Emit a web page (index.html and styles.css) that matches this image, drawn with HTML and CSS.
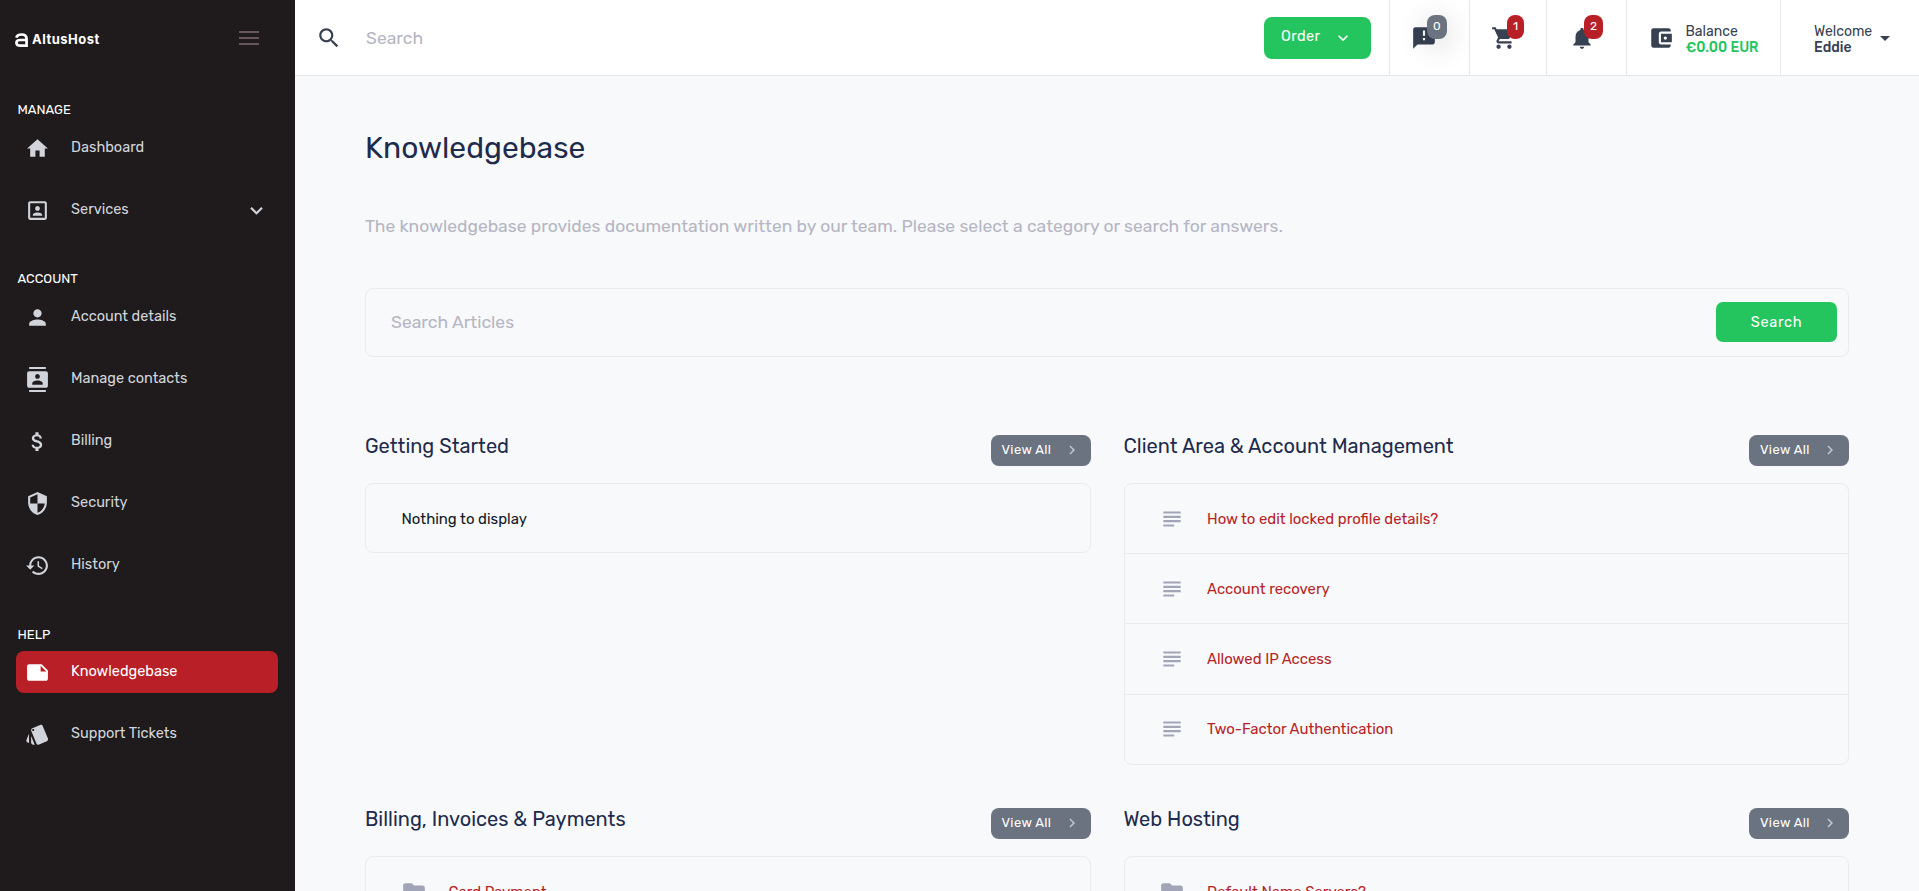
FILE: index.html
```html
<!DOCTYPE html>
<html lang="en">
<head>
  <meta charset="UTF-8">
  <title>Knowledgebase - AltusHost</title>
  <meta name="viewport" content="width=device-width, initial-scale=1.0">

  <link rel="stylesheet" href="styles.css">
</head>
<body>

  <!-- icon set -->
  <svg class="sprite" width="0" height="0">
    <symbol id="i-home" viewBox="0 0 24 24"><path d="M10 20v-6h4v6h5v-8h3L12 3 2 12h3v8z"/></symbol>
    <symbol id="i-portrait" viewBox="0 0 24 24"><path d="M12 12.25c1.24 0 2.25-1.01 2.25-2.25S13.24 7.75 12 7.75 9.75 8.76 9.75 10s1.01 2.25 2.25 2.25zm4.5 4c0-1.5-3-2.25-4.5-2.25s-4.5.75-4.5 2.25V17h9v-.75zM19 3H5c-1.1 0-2 .9-2 2v14c0 1.1.9 2 2 2h14c1.1 0 2-.9 2-2V5c0-1.1-.9-2-2-2zm0 16H5V5h14v14z"/></symbol>
    <symbol id="i-person" viewBox="0 0 24 24"><path d="M12 12c2.21 0 4-1.79 4-4s-1.79-4-4-4-4 1.79-4 4 1.79 4 4 4zm0 2c-2.67 0-8 1.34-8 4v2h16v-2c0-2.66-5.33-4-8-4z"/></symbol>
    <symbol id="i-contacts" viewBox="0 0 24 24"><path d="M20 0H4v2h16V0zM4 24h16v-2H4v2zM20 4H4c-1.1 0-2 .9-2 2v12c0 1.1.9 2 2 2h16c1.1 0 2-.9 2-2V6c0-1.1-.9-2-2-2zm-8 2.75c1.24 0 2.25 1.01 2.25 2.25s-1.01 2.25-2.25 2.25S9.75 10.24 9.75 9 10.76 6.75 12 6.75zM17 17H7v-1.5c0-1.67 3.33-2.5 5-2.5s5 .83 5 2.5V17z"/></symbol>
    <symbol id="i-money" viewBox="0 0 24 24"><path d="M11.8 10.9c-2.27-.59-3-1.2-3-2.15 0-1.09 1.01-1.85 2.7-1.85 1.78 0 2.44.85 2.5 2.1h2.21c-.07-1.72-1.12-3.3-3.21-3.81V3h-3v2.16c-1.94.42-3.5 1.68-3.5 3.61 0 2.31 1.91 3.46 4.7 4.13 2.5.6 3 1.48 3 2.41 0 .69-.49 1.79-2.7 1.79-2.06 0-2.87-.92-2.98-2.1h-2.2c.12 2.19 1.76 3.42 3.68 3.83V21h3v-2.15c1.95-.37 3.5-1.5 3.5-3.55 0-2.84-2.43-3.81-4.7-4.4z"/></symbol>
    <symbol id="i-security" viewBox="0 0 24 24"><path d="M12 1L3 5v6c0 5.55 3.84 10.74 9 12 5.16-1.26 9-6.45 9-12V5l-9-4zm0 10.99h7c-.53 4.12-3.28 7.79-7 8.94V12H5V6.3l7-3.11v8.8z"/></symbol>
    <symbol id="i-history" viewBox="0 0 24 24"><path d="M13 3c-4.97 0-9 4.03-9 9H1l3.89 3.89.07.14L9 12H6c0-3.87 3.13-7 7-7s7 3.13 7 7-3.13 7-7 7c-1.93 0-3.68-.79-4.94-2.06l-1.42 1.42C8.27 19.99 10.51 21 13 21c4.97 0 9-4.03 9-9s-4.03-9-9-9zm-1 5v5l4.28 2.54.72-1.21-3.5-2.08V8H12z"/></symbol>
    <symbol id="i-note" viewBox="0 0 24 24"><path d="M22 10l-6-6H4c-1.1 0-2 .9-2 2v12.01c0 1.1.9 1.99 2 1.99l16-.01c1.1 0 2-.89 2-1.99v-8zm-7-4.5l5.5 5.5H15V5.5z"/></symbol>
    <symbol id="i-style" viewBox="0 0 24 24"><path d="M2.53 19.65l1.34.56v-9.03l-2.43 5.86c-.41 1.02.08 2.19 1.09 2.61zm19.5-3.7L17.07 3.98c-.31-.75-1.04-1.21-1.81-1.23-.26 0-.53.04-.79.15L7.1 5.95c-.75.31-1.21 1.03-1.23 1.8-.01.27.04.54.15.8l4.96 11.97c.31.76 1.05 1.22 1.83 1.23.26 0 .52-.05.77-.15l7.36-3.05c1.02-.42 1.51-1.59 1.09-2.6zM7.88 8.75c-.55 0-1-.45-1-1s.45-1 1-1 1 .45 1 1-.45 1-1 1zm-2 11c0 1.1.9 2 2 2h1.45l-3.45-8.34v6.34z"/></symbol>
    <symbol id="i-down" viewBox="0 0 24 24"><path d="M7.41 8.59L12 13.17l4.59-4.58L18 10l-6 6-6-6z"/></symbol>
    <symbol id="i-right" viewBox="0 0 24 24"><path d="M10 6L8.59 7.41 13.17 12l-4.58 4.59L10 18l6-6z"/></symbol>
    <symbol id="i-search" viewBox="0 0 24 24"><path d="M15.5 14h-.79l-.28-.27C15.41 12.59 16 11.11 16 9.5 16 5.91 13.09 3 9.5 3S3 5.91 3 9.5 5.91 16 9.5 16c1.61 0 3.09-.59 4.23-1.57l.27.28v.79l5 4.99L20.49 19l-4.99-5zm-6 0C7.01 14 5 11.99 5 9.5S7.01 5 9.5 5 14 7.01 14 9.5 11.99 14 9.5 14z"/></symbol>
    <symbol id="i-feedback" viewBox="0 0 24 24"><path d="M20 2H4c-1.1 0-1.99.9-1.99 2L2 22l4-4h14c1.1 0 2-.9 2-2V4c0-1.1-.9-2-2-2zm-7 12h-2v-2h2v2zm0-4h-2V5h2v5z"/></symbol>
    <symbol id="i-cart" viewBox="0 0 24 24"><path d="M7 18c-1.1 0-1.99.9-1.99 2S5.9 22 7 22s2-.9 2-2-.9-2-2-2zM1 2v2h2l3.6 7.59-1.35 2.45c-.16.28-.25.61-.25.96 0 1.1.9 2 2 2h12v-2H7.42c-.14 0-.25-.11-.25-.25l.03-.12.9-1.63h7.45c.75 0 1.41-.41 1.75-1.03l3.58-6.49c.08-.14.12-.31.12-.48 0-.55-.45-1-1-1H5.21l-.94-2H1zm16 16c-1.1 0-1.99.9-1.99 2s.89 2 1.99 2 2-.9 2-2-.9-2-2-2z"/></symbol>
    <symbol id="i-bell" viewBox="0 0 24 24"><path d="M12 22c1.1 0 2-.9 2-2h-4c0 1.1.89 2 2 2zm6-6v-5c0-3.07-1.64-5.64-4.5-6.32V4c0-.83-.67-1.5-1.5-1.5s-1.5.67-1.5 1.5v.68C7.63 5.36 6 7.92 6 11v5l-2 2v1h16v-1l-2-2z"/></symbol>
    <symbol id="i-wallet" viewBox="0 0 24 24"><path d="M21 18v1c0 1.1-.9 2-2 2H5c-1.11 0-2-.9-2-2V5c0-1.1.89-2 2-2h14c1.1 0 2 .9 2 2v1h-9c-1.11 0-2 .9-2 2v8c0 1.1.89 2 2 2h9zm-9-2h10V8H12v8zm4-2.5c-.83 0-1.5-.67-1.5-1.5s.67-1.5 1.5-1.5 1.5.67 1.5 1.5-.67 1.5-1.5 1.5z"/></symbol>
    <symbol id="i-article" viewBox="0 0 24 24"><path d="M4 5h16v2H4zM4 9h16v2H4zM4 13h16v2H4zM4 17h10v2H4z"/></symbol>
    <symbol id="i-folder" viewBox="0 0 24 24"><path d="M10 4H4c-1.1 0-1.99.9-1.99 2L2 18c0 1.1.9 2 2 2h16c1.1 0 2-.9 2-2V8c0-1.1-.9-2-2-2h-8l-2-2z"/></symbol>
  </svg>

  <div class="app">

    <aside class="sidebar">
      <div class="brand">
        <svg class="brand-mark" viewBox="0 0 12 13">
          <path d="M1.2 4.4C1.8 2.3 3.4 1.4 6 1.4c3.1 0 4.7 1.3 4.7 4v6.3H5c-2.4 0-3.7-1-3.7-2.7S2.6 6.5 5 6.5h5.7" fill="none" stroke="#fff" stroke-width="2.5"/>
        </svg>
        <span class="brand-name">AltusHost</span>
        <span class="menu-toggle"><i></i><i></i><i></i></span>
      </div>

      <nav class="nav">
        <h6>MANAGE</h6>
        <a class="nav-item"><svg><use href="#i-home"/></svg><span>Dashboard</span></a>
        <a class="nav-item"><svg><use href="#i-portrait"/></svg><span>Services</span><svg class="nav-arrow"><use href="#i-down"/></svg></a>
      </nav>

      <nav class="nav">
        <h6>ACCOUNT</h6>
        <a class="nav-item"><svg><use href="#i-person"/></svg><span>Account details</span></a>
        <a class="nav-item"><svg><use href="#i-contacts"/></svg><span>Manage contacts</span></a>
        <a class="nav-item"><svg><use href="#i-money"/></svg><span>Billing</span></a>
        <a class="nav-item"><svg><use href="#i-security"/></svg><span>Security</span></a>
        <a class="nav-item"><svg><use href="#i-history"/></svg><span>History</span></a>
      </nav>

      <nav class="nav">
        <h6>HELP</h6>
        <a class="nav-item active"><svg><use href="#i-note"/></svg><span>Knowledgebase</span></a>
        <a class="nav-item"><svg><use href="#i-style"/></svg><span>Support Tickets</span></a>
      </nav>
    </aside>

    <div class="main">
      <header class="topbar">
        <svg class="search-icon"><use href="#i-search"/></svg>
        <input class="top-search" type="text" placeholder="Search">
        <button class="btn-order"><span>Order</span> <svg><use href="#i-down"/></svg></button>
        <div class="cell cell-chat">
          <svg><use href="#i-feedback"/></svg>
          <span class="badge badge-gray">0</span>
        </div>
        <div class="cell cell-cart">
          <svg><use href="#i-cart"/></svg>
          <span class="badge">1</span>
        </div>
        <div class="cell cell-bell">
          <svg><use href="#i-bell"/></svg>
          <span class="badge">2</span>
        </div>
        <div class="cell cell-balance">
          <svg><use href="#i-wallet"/></svg>
          <div class="two-lines">Balance<b class="amount">€0.00 EUR</b></div>
        </div>
        <div class="cell cell-user">
          <div class="two-lines">Welcome<b>Eddie</b></div>
          <span class="caret"></span>
        </div>
      </header>

      <div class="content">
        <h1>Knowledgebase</h1>
        <p class="intro">The knowledgebase provides documentation written by our team. Please select a category or search for answers.</p>

        <form class="search-box">
          <input type="text" placeholder="Search Articles">
          <button type="button">Search</button>
        </form>

        <div class="grid">
          <section>
            <div class="section-head">
              <h3>Getting Started</h3>
              <a class="view-all">View All <svg><use href="#i-right"/></svg></a>
            </div>
            <div class="card">
              <div class="row empty">Nothing to display</div>
            </div>
          </section>

          <section>
            <div class="section-head">
              <h3>Client Area &amp; Account Management</h3>
              <a class="view-all">View All <svg><use href="#i-right"/></svg></a>
            </div>
            <div class="card">
              <a class="row"><svg><use href="#i-article"/></svg>How to edit locked profile details?</a>
              <a class="row"><svg><use href="#i-article"/></svg>Account recovery</a>
              <a class="row"><svg><use href="#i-article"/></svg>Allowed IP Access</a>
              <a class="row"><svg><use href="#i-article"/></svg>Two-Factor Authentication</a>
            </div>
          </section>

          <section>
            <div class="section-head">
              <h3>Billing, Invoices &amp; Payments</h3>
              <a class="view-all">View All <svg><use href="#i-right"/></svg></a>
            </div>
            <div class="card">
              <a class="row"><svg><use href="#i-folder"/></svg>Card Payment</a>
            </div>
          </section>

          <section>
            <div class="section-head">
              <h3>Web Hosting</h3>
              <a class="view-all">View All <svg><use href="#i-right"/></svg></a>
            </div>
            <div class="card">
              <a class="row"><svg><use href="#i-folder"/></svg>Default Name Servers?</a>
            </div>
          </section>
        </div>
      </div>
    </div>

  </div>

</body>
</html>
```
FILE: styles.css
```css
* {
  box-sizing: border-box;
}

body {
  margin: 0;
  font-family: Rubik, Roboto, sans-serif;
  font-size: 14.5px;
  color: #111827;
  background: #f7f9fa;
  overflow: hidden;
}

h1, h3, h6, p {
  margin: 0;
  font-weight: 400;
}

svg {
  fill: currentColor;
  flex-shrink: 0;
}

input, button {
  font-family: inherit;
  border: none;
  outline: none;
}

input::placeholder {
  color: #b5b5c3;
  opacity: 1;
}

.sprite {
  display: none;
}

.app {
  display: flex;
  height: 100vh;
}

/* sidebar */
.sidebar {
  width: 295px;
  flex-shrink: 0;
  background: #1f1b1c;
}

.brand {
  display: flex;
  align-items: center;
  height: 76px;
  padding: 3px 36px 0 14.5px;
  margin-bottom: 26px;
}

.brand-mark {
  width: 13px;
  height: 14px;
}

.brand-name {
  margin-left: 4.5px;
  padding-bottom: 1px;
  color: #fff;
  font-family: Inter, sans-serif;
  font-size: 13px;
  font-weight: 700;
  letter-spacing: 0.5px;
}

.menu-toggle {
  display: flex;
  flex-direction: column;
  gap: 4px;
  width: 20px;
  margin: -3px 0 0 auto;
}

.menu-toggle i {
  height: 2px;
  background: #67575b;
}

.nav {
  padding: 0 17px 0 16px;
  margin-bottom: 40px;
}

.nav h6 {
  padding-left: 1.5px;
  margin-bottom: 9px;
  color: #fff;
  font-size: 13px;
  line-height: 16px;
}

.nav:last-child h6 {
  padding-top: 1px;
  margin-bottom: 8px;
}

.nav-item {
  display: flex;
  align-items: center;
  height: 42px;
  padding: 0 9px;
  margin-bottom: 20px;
  border-radius: 8px;
  color: #d1d5db;
}

.nav-item:last-child {
  margin-bottom: 0;
}

.nav-item svg {
  width: 25px;
  height: 25px;
}

.nav-item span {
  margin-left: 21px;
  padding-bottom: 2px;
}

.nav-item .nav-arrow {
  margin-left: auto;
}

.nav-item.active {
  background: #b81f26;
  color: #fff;
}

/* top bar */
.main {
  flex: 1;
  min-width: 0;
}

.topbar {
  display: flex;
  align-items: center;
  height: 76px;
  padding-left: 21px;
  background: #fff;
  border-bottom: 1px solid #e5e7eb;
  color: #374151;
}

.search-icon {
  width: 26px;
  height: 26px;
}

.top-search {
  flex: 1;
  padding: 0 0 0 24px;
  font-size: 17.5px;
}

.btn-order {
  display: flex;
  align-items: center;
  width: 107px;
  height: 42px;
  margin: 1px 18px 0 0;
  padding: 0 18px 0 17px;
  border-radius: 8px;
  background: #24c55e;
  color: #fff;
  font-size: 14.5px;
  letter-spacing: 0.4px;
  line-height: 18px;
}

.btn-order span {
  padding-bottom: 5px;
}

.btn-order svg {
  width: 20px;
  height: 20px;
  margin-left: auto;
}

.cell {
  position: relative;
  display: flex;
  align-items: center;
  height: 75px;
  border-left: 1px solid #e5e7eb;
}

.cell svg {
  width: 26px;
  height: 26px;
}

.cell-chat {
  width: 80px;
  padding-left: 21px;
}

.cell-cart {
  width: 77px;
  padding-left: 21px;
}

.cell-bell {
  width: 80px;
  padding-left: 22px;
}

.badge {
  position: absolute;
  top: 15px;
  left: 37px;
  height: 24px;
  padding: 0 6px;
  border-radius: 8px;
  background: #b81f26;
  color: #fff;
  font-size: 12px;
  line-height: 23px;
}

.badge-gray {
  background: #6b7280;
  box-shadow: 0 6px 24px 8px rgba(0, 0, 0, 0.08);
}

.cell-balance {
  width: 154px;
  padding-left: 21px;
}

.cell-user {
  width: 139px;
  padding-left: 33px;
}

.two-lines {
  padding-top: 5px;
  font-size: 14px;
  line-height: 16px;
}

.two-lines b {
  display: block;
  font-weight: 500;
}

.cell-balance .two-lines {
  margin-left: 11.5px;
}

.two-lines .amount {
  color: #22c55e;
}

.caret {
  margin: 1px 0 0 8px;
  border: 5.5px solid transparent;
  border-top-color: #374151;
  border-bottom: none;
}

/* page */
.content {
  padding: 52px 70px 0;
}

h1 {
  color: #1e2b4d;
  font-size: 30px;
  line-height: 40px;
}

.intro {
  margin: 46px 0 50px;
  color: #b5b5c3;
  font-size: 17.5px;
  line-height: 24px;
}

.search-box {
  display: flex;
  align-items: center;
  height: 69px;
  padding: 0 11px 1px 25px;
  border: 1px solid #e9ebee;
  border-radius: 8px;
}

.search-box input {
  flex: 1;
  padding: 0;
  background: none;
  font-size: 17.5px;
}

.search-box button {
  width: 121px;
  height: 40px;
  border-radius: 7px;
  background: #24c55e;
  color: #fff;
  font-size: 14.5px;
  letter-spacing: 0.7px;
}

.grid {
  display: grid;
  grid-template-columns: 1fr 1fr;
  gap: 43px 33px;
  margin-top: 78px;
}

.section-head {
  display: flex;
  justify-content: space-between;
  margin-bottom: 17px;
}

h3 {
  color: #1e2b4d;
  font-size: 20px;
  line-height: 23px;
}

.view-all {
  display: flex;
  align-items: center;
  width: 100px;
  height: 31px;
  padding: 0 10px 2px 11px;
  border-radius: 8px;
  background: #6b7280;
  color: #fff;
  font-size: 13px;
  letter-spacing: 0.4px;
}

.view-all svg {
  width: 18px;
  height: 18px;
  margin: 1px 0 0 auto;
  opacity: 0.6;
}

.card {
  border: 1px solid #e9ebee;
  border-radius: 8px;
}

.row {
  display: flex;
  align-items: center;
  height: 69.3px;
  padding-left: 34.500px;
  color: #b81f26;
  font-size: 14.9px;
}

.row + .row {
  height: 70.2px;
  border-top: 1px solid #e9ebee;
}

.row svg {
  width: 26px;
  height: 26px;
  margin-right: 22px;
  color: #a1a5b7;
}

.row.empty {
  height: 68px;
  padding: 2px 0 0 35.5px;
  color: #111827;
}
```
